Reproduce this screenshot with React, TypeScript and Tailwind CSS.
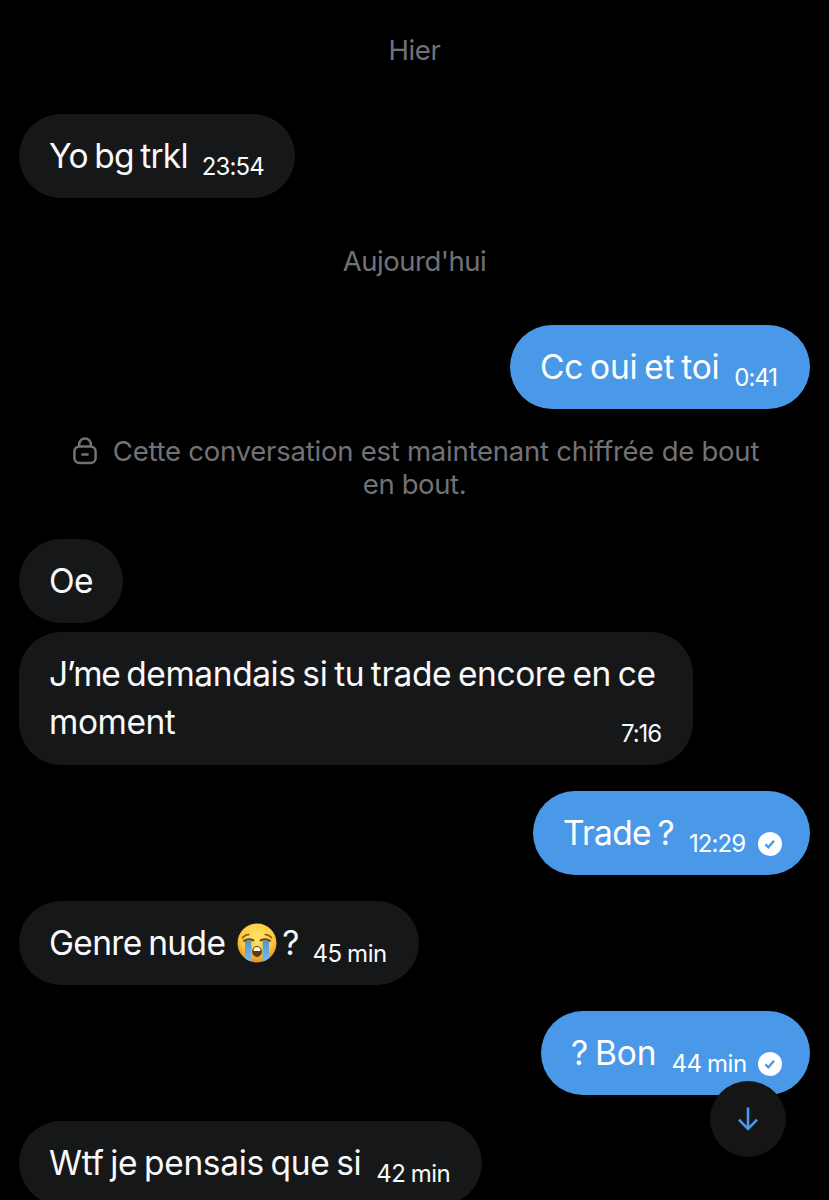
import React from "react";

type BubbleProps = {
	sent?: boolean;
	className: string;
	time?: string;
	timeClass?: string;
	seen?: boolean;
	children: React.ReactNode;
};

function SeenBadge() {
	return (
		<svg viewBox="0 0 24 24" className="ml-auto h-6 w-6 shrink-0">
			<circle cx="12" cy="12" r="12" fill="#fff" />
			<path d="M7.4 12.4l3 2.9 5.6-6.5" fill="none" stroke="#4a99e9" strokeWidth="2.4" />
		</svg>
	);
}

function LockIcon() {
	return (
		<svg viewBox="0 0 24 28" className="h-7 w-6 shrink-0" fill="none" stroke="#717276" strokeWidth="2.5">
			<rect x="1.4" y="9.4" width="21.2" height="16.6" rx="5" />
			<path d="M6.2 9.4V7.2a5.8 5.8 0 0 1 11.6 0v2.2M8.4 17.4h7.2" />
		</svg>
	);
}

function SobEmoji() {
	return (
		<svg viewBox="0 0 40 40" className="h-10 w-10 shrink-0">
			<defs>
				<radialGradient id="face" cx="50%" cy="34%" r="66%">
					<stop offset="0" stopColor="#ffe66b" />
					<stop offset="0.65" stopColor="#fbc83e" />
					<stop offset="1" stopColor="#e58a1f" />
				</radialGradient>
				<linearGradient id="tear" x1="0" y1="0" x2="0" y2="1">
					<stop offset="0" stopColor="#4f94cd" />
					<stop offset="1" stopColor="#79bdee" />
				</linearGradient>
			</defs>
			<circle cx="20" cy="20" r="19.5" fill="url(#face)" />
			<path d="M8 17.5h6.4v21.1a19.5 19.5 0 0 1-6.4-3.3zM25.6 17.5H32v17.800a19.5 19.5 0 0 1-6.4 3.3z" fill="url(#tear)" />
			<path d="M7 17.800q4.600-3 9.400-.4M23.600 17.400q4.800-2.600 9.400.4" fill="none" stroke="#6b4219" strokeWidth="2" strokeLinecap="round" />
			<path d="M5.4 15q1.600-2.800 6.400-3.600M34.600 15q-1.600-2.800-6.400-3.600" fill="none" stroke="#7d5117" strokeWidth="1.5" strokeLinecap="round" />
			<ellipse cx="20" cy="28.5" rx="4.9" ry="5.4" fill="#63370f" />
			<path d="M16.400 27q.6-3 3.600-3t3.600 3q-.2 1-1.200 1h-4.800q-1 0-1.200-1z" fill="#fff" />
		</svg>
	);
}

function Bubble({ sent, className, time, timeClass, seen, children }: BubbleProps) {
	return (
		<div
			className={`flex shrink-0 rounded-[42px] py-[18px] pl-[30px] pr-7 text-[33.5px] leading-[48px] whitespace-nowrap [word-spacing:-2.2px] ${
				sent ? "self-end bg-[#4a99e9] text-white" : "self-start bg-[#161719] text-[#f8f9fa]"
			} ${className}`}
		>
			{children}
			{time && (
				<div className="mb-px flex h-6 flex-1 items-center self-end text-2xl leading-6 [word-spacing:-1px]">
					<span className={timeClass}>{time}</span>
					{seen && <SeenBadge />}
				</div>
			)}
		</div>
	);
}

export default function App() {
	return (
		<main className="relative flex h-[1200px] w-[829px] flex-col overflow-hidden bg-black px-[19px] font-['Inter',sans-serif]">
			<p className="mt-8 h-9 shrink-0 text-center text-[27.5px] leading-9 tracking-[-0.4px] text-[#717276]">Hier</p>

			<Bubble className="mt-[45.5px] w-[276px]" time="23:54" timeClass="ml-3.5 tracking-[-0.9px]">
				<span className="tracking-[-0.75px]">Yo bg trkl</span>
			</Bubble>

			<p className="mt-[45.5px] h-9 shrink-0 text-center text-[27.5px] leading-9 tracking-[-0.5px] text-[#717276]">Aujourd'hui</p>

			<Bubble sent className="mt-[45.5px] w-[300px]" time="0:41" timeClass="ml-[15px] tracking-[-1.1px]">
				<span className="tracking-[-0.25px]">Cc oui et toi</span>
			</Bubble>

			{/* Encryption notice */}
			<div className="mt-[26.5px] flex h-[66px] shrink-0 flex-col items-center text-[27.5px] leading-[33px] text-[#717276]">
				<div className="ml-[3px] flex gap-4 whitespace-nowrap tracking-[-0.24px]">
					<div className="pt-0.5">
						<LockIcon />
					</div>
					<span>Cette conversation est maintenant chiffrée de bout</span>
				</div>
				<span className="tracking-[-0.4px]">en bout.</span>
			</div>

			<Bubble className="mt-[38px] w-[104px]">
				<span className="tracking-[-0.6px]">Oe</span>
			</Bubble>

			<Bubble className="mt-[8.5px] h-[133px] w-[674px]" time="7:16" timeClass="ml-auto mr-1 tracking-[-1.1px]">
				<p className="w-[560px] tracking-[-0.45px]">
					<span>
						<span className="tracking-[-1.4px]">J’me</span>
						<span className="tracking-[-0.42px]"> demandais si tu trade encore en ce</span>
					</span>
					<br />
					<span>moment</span>
				</p>
			</Bubble>

			<Bubble sent className="mt-[26px] w-[277px]" time="12:29" timeClass="ml-[15px] tracking-[-0.9px]" seen>
				<span className="tracking-[-0.65px]">Trade ?</span>
			</Bubble>

			<Bubble className="mt-[26px] w-[400px]" time="45 min" timeClass="ml-[13px] tracking-[-0.4px]">
				<span className="flex items-center">
					<span className="tracking-[-0.65px]">Genre nude</span>
					<span className="ml-3 mr-[5px]">
						<SobEmoji />
					</span>
					<span>?</span>
				</span>
			</Bubble>

			<Bubble sent className="mt-[26px] w-[269px]" time="44 min" timeClass="ml-[15px] tracking-[-0.4px]" seen>
				<span className="tracking-[-0.15px]">? Bon</span>
			</Bubble>

			<Bubble className="mt-[26px] w-[463px]" time="42 min" timeClass="ml-[15px] tracking-[-0.5px]">
				<span className="tracking-[-0.36px]">Wtf je pensais que si</span>
			</Bubble>

			{/* Scroll to latest */}
			<button className="absolute left-[710px] top-[1081px] flex h-[76px] w-[76px] items-center justify-center rounded-full bg-[#151515]">
				<svg viewBox="0 0 24 26" className="h-[26px] w-6" fill="none" stroke="#4a99e9" strokeWidth="2.6">
					<path d="M12 1.5v22M2.9 13.6l9.1 9.3 9.1-9.3" />
				</svg>
			</button>
		</main>
	);
}
